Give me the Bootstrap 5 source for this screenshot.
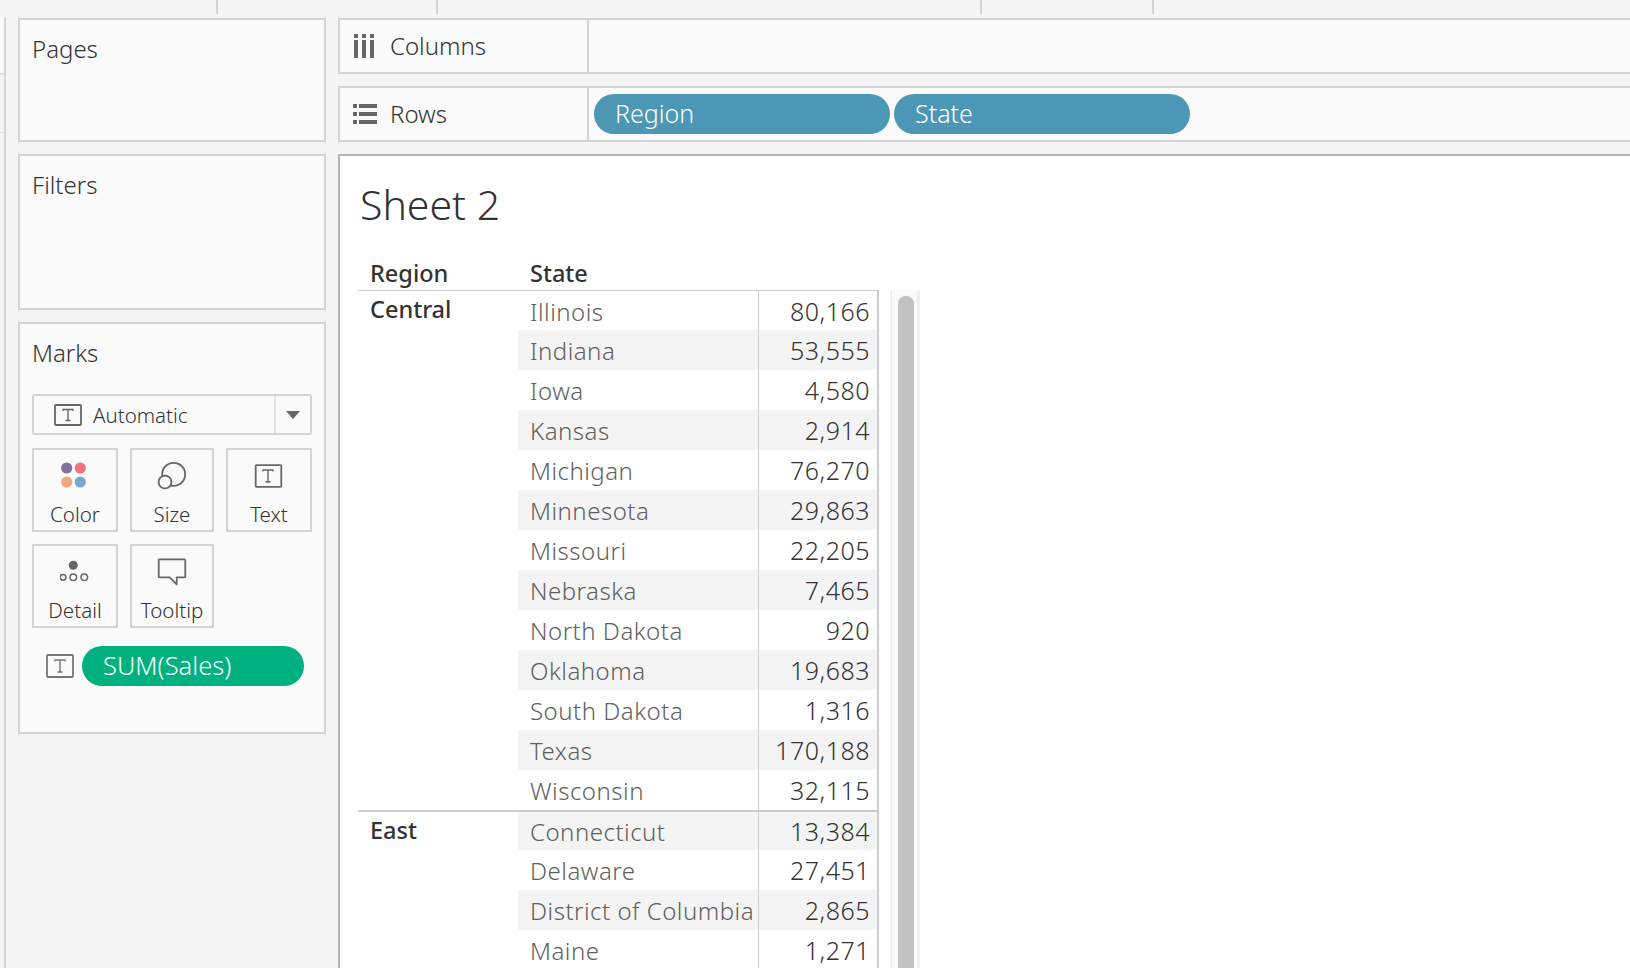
<!DOCTYPE html>
<html lang="en">
<head>
  <meta charset="UTF-8" />
  <title>Sheet 2</title>
  <link href="https://cdn.jsdelivr.net/npm/bootstrap@5.3.3/dist/css/bootstrap.min.css" rel="stylesheet">
  <style>
    body {
      height: 968px;
      overflow: hidden;
      background-color: #f5f5f5;
      font-family: "Noto Sans", "Lato", sans-serif;
      color: #333;
    }

    /* strip of tab ticks along the top */
    .top-ticks { height: 14px; }
    .top-ticks div { border-right: 2px solid #d4d4d4; height: 14px; }
    .tick-a { width: 218px; }
    .tick-b { width: 220px; }
    .tick-c { width: 544px; }
    .tick-d { width: 172px; }

    .app-body { margin-top: 4px; height: 950px; }

    .edge-strip { width: 6px; margin-right: 12px; border-right: 2px solid #d4d4d4; flex: none; }
    .edge-cell { height: 57px; border-bottom: 2px solid #ddd; background-color: #fafafa; }
    .edge-cell + .edge-cell { height: 58px; border-bottom: 1px solid #e4e4e4; background-color: transparent; }

    .side-col { width: 308px; flex: none; margin-right: 12px; gap: 12px; }
    .side-box {
      flex: none;
      background-color: #fafafa;
      border: 2px solid #d4d4d4;
      padding: 14px 12px;
      font-size: 24px;
      font-weight: 300;
      line-height: 30px;
    }
    .box-pages { height: 124px; }
    .box-filters { height: 156px; }
    .box-marks { height: 412px; }

    .mark-select {
      height: 41px;
      margin-top: 26px;
      border: 2px solid #d4d4d4;
      border-radius: 3px;
      font-size: 20.5px;
    }
    .mark-select .sel-label { padding-left: 20px; gap: 11px; }
    .sel-arrow { width: 36px; height: 100%; border-left: 2px solid #e2e2e2; }

    .mark-grid { margin-top: 13px; display: grid; grid-template-columns: 86px 84px 86px; gap: 12px; }
    .mark-btn {
      height: 84px;
      border: 2px solid #d4d4d4;
      font-size: 20.5px;
      line-height: 24px;
      padding-top: 10px;
      text-align: center;
      color: #333;
    }
    .mark-btn svg { display: block; margin: 0 auto 12px; }

    .pill-row { margin-top: 18px; padding-left: 14px; gap: 8px; }
    .field-pill { height: 40px; color: #fff; font-size: 25px; font-weight: 300; line-height: 38px; padding-left: 21px; }
    .pill-sales { width: 222px; background-color: #00b180; font-size: 25.5px; }
    .pill-dim { width: 296px; background-color: #4b97b5; }

    .main-col { width: 1300px; flex: none; gap: 12px; }
    .shelf {
      flex: none;
      height: 56px;
      background-color: #fafafa;
      border: 2px solid #d4d4d4;
      font-size: 24px;
      font-weight: 300;
    }
    .shelf-label { width: 249px; height: 100%; border-right: 2px solid #d4d4d4; flex: none; }
    .shelf-icon { width: 50px; flex: none; padding-right: 1px; }
    .shelf-pills { padding-left: 5px; gap: 4px; }

    .view-pane {
      flex: none;
      height: 900px;
      background-color: #fff;
      border: 2px solid #b5b5b5;
      padding-left: 18px;
    }
    .sheet-title {
      font-size: 41px;
      font-weight: 300;
      line-height: 48px;
      margin: 0;
      padding: 24px 0 0 2px;
      color: #333;
      height: 100px;
    }

    .data-wrap { gap: 11px; }
    .data-table { table-layout: fixed; width: 521px; border-collapse: separate; border-spacing: 0; }
    .data-table th {
      height: 35px;
      padding: 0 0 0 12px;
      font-size: 23.5px;
      font-weight: 500;
      line-height: 30px;
      border-bottom: 1px solid #ccc;
      color: #333;
    }
    .data-table td {
      height: 40px;
      padding: 0 12px;
      font-size: 24px;
      font-weight: 300;
      line-height: 30px;
      white-space: nowrap;
      vertical-align: middle;
    }
    .data-table tbody tr:first-child td { height: 39px; }
    .data-table td.st-cell { color: #5f5f5f; letter-spacing: .5px; overflow: hidden; padding: 2px 0 0 12px; }
    .data-table td.val-cell {
      font-size: 25px;
      letter-spacing: .5px;
      text-align: right;
      border-left: 1px solid #ccc;
      border-right: 2px solid #ccc;
      padding: 0 7px 0 0;
      color: #333;
    }
    .data-table td.reg-cell { font-size: 23.5px; font-weight: 500; vertical-align: top; padding: 3px 0 0 12px; }
    .data-table tr.band td.st-cell, .data-table tr.band td.val-cell { background-color: #f4f4f4; }
    .data-table tr.sect td { border-top: 2px solid #ccc; }

    .scroll-track {
      width: 30px;
      height: 800px;
      margin-top: 34px;
      padding: 6px 0 0 6px;
      background-color: #fafafa;
      border-left: 2px solid #f0f0f0;
      border-right: 3px solid #f0f0f0;
    }
    .scroll-thumb { width: 16px; height: 800px; background-color: #c1c1c1; border-radius: 8px 8px 0 0; }
  </style>
</head>
<body>

<div class="top-ticks d-flex">
  <div class="tick-a"></div>
  <div class="tick-b"></div>
  <div class="tick-c"></div>
  <div class="tick-d"></div>
</div>

<div class="app-body d-flex">
  <div class="edge-strip">
    <div class="edge-cell"></div>
    <div class="edge-cell"></div>
  </div>

  <!-- Cards -->
  <div class="side-col d-flex flex-column">
    <div class="side-box box-pages">Pages</div>
    <div class="side-box box-filters">Filters</div>
    <div class="side-box box-marks">
      <div>Marks</div>
      <div class="mark-select d-flex align-items-center justify-content-between">
        <div class="sel-label d-flex align-items-center">
          <svg width="28" height="22" viewBox="0 0 28 22"><rect x="1" y="1" width="26" height="20" rx="1" fill="none" stroke="#666" stroke-width="1.8"/><path d="M9 7V5.5h10V7M14 5.5v11M11.5 16.5h5" fill="none" stroke="#666" stroke-width="1.4"/></svg>
          <span>Automatic</span>
        </div>
        <div class="sel-arrow d-flex align-items-center justify-content-center">
          <svg width="14" height="8" viewBox="0 0 14 8"><path d="M0 0h14L7 8z" fill="#666"/></svg>
        </div>
      </div>
      <div class="mark-grid">
        <div class="mark-btn">
          <svg width="30" height="30" viewBox="0 0 30 30"><circle cx="6.7" cy="8" r="5.6" fill="#86709a"/><circle cx="20.3" cy="8" r="5.6" fill="#f7707f"/><circle cx="6.7" cy="22" r="5.6" fill="#f2a67c"/><circle cx="20.3" cy="22" r="5.6" fill="#7ba6cf"/></svg>
          Color
        </div>
        <div class="mark-btn">
          <svg width="30" height="30" viewBox="0 0 30 30"><circle cx="8" cy="22" r="6.4" fill="none" stroke="#666" stroke-width="1.8"/><path d="M5.34 16.17A11.5 11.5 0 1 1 13.46 25.35" fill="none" stroke="#666" stroke-width="1.8"/></svg>
          Size
        </div>
        <div class="mark-btn">
          <svg width="30" height="30" viewBox="0 0 30 30"><rect x="1.7" y="5.2" width="25.6" height="21.6" rx="1" fill="none" stroke="#666" stroke-width="1.8"/><path d="M9 11.5V10h10v1.5M14 10v12M11.5 22h5" fill="none" stroke="#666" stroke-width="1.4"/></svg>
          Text
        </div>
        <div class="mark-btn">
          <svg width="30" height="30" viewBox="0 0 30 30"><circle cx="13.3" cy="9.3" r="4.5" fill="#666"/><circle cx="3" cy="21.3" r="2.9" fill="none" stroke="#666" stroke-width="1.5"/><circle cx="13.3" cy="21.3" r="3.3" fill="none" stroke="#666" stroke-width="1.5"/><circle cx="24.3" cy="21.3" r="3.3" fill="none" stroke="#666" stroke-width="1.5"/></svg>
          Detail
        </div>
        <div class="mark-btn">
          <svg width="30" height="30" viewBox="0 0 30 30"><path d="M2.7 3.3h24.6a1 1 0 0 1 1 1v16a1 1 0 0 1-1 1h-7.6v7l-7-7H2.7a1 1 0 0 1-1-1v-16a1 1 0 0 1 1-1z" fill="none" stroke="#666" stroke-width="1.8" stroke-linejoin="round"/></svg>
          Tooltip
        </div>
      </div>
      <div class="pill-row d-flex align-items-center">
        <svg width="28" height="24" viewBox="0 0 28 24"><rect x="1" y="1" width="26" height="22" rx="1" fill="none" stroke="#777" stroke-width="1.8"/><path d="M9 7.5V6h10v1.5M14 6v12M11.5 18h5" fill="none" stroke="#777" stroke-width="1.4"/></svg>
        <div class="field-pill pill-sales rounded-pill">SUM(Sales)</div>
      </div>
    </div>
  </div>

  <div class="main-col d-flex flex-column">
    <div class="shelf d-flex align-items-center">
      <div class="shelf-label d-flex align-items-center">
        <div class="shelf-icon d-flex justify-content-center">
          <svg width="22" height="26" viewBox="0 0 22 26"><path d="M0 1h4v4H0zM8 1h4v4H8zM16 1h4v4h-4zM0 7h4v18H0zM8 7h4v18H8zM16 7h4v18h-4z" fill="#666"/></svg>
        </div>
        <span>Columns</span>
      </div>
    </div>
    <div class="shelf d-flex align-items-center">
      <div class="shelf-label d-flex align-items-center">
        <div class="shelf-icon d-flex justify-content-center">
          <svg width="24" height="20" viewBox="0 0 24 20"><path d="M0 0h4v4H0zM6 0h18v4H6zM0 8h4v4H0zM6 8h18v4H6zM0 16h4v4H0zM6 16h18v4H6z" fill="#666"/></svg>
        </div>
        <span>Rows</span>
      </div>
      <div class="shelf-pills d-flex align-items-center">
        <div class="field-pill pill-dim rounded-pill">Region</div>
        <div class="field-pill pill-dim rounded-pill">State</div>
      </div>
    </div>

    <div class="view-pane">
      <h1 class="sheet-title">Sheet 2</h1>
      <div class="data-wrap d-flex align-items-start">
        <table class="data-table">
          <colgroup><col style="width:160px"><col style="width:240px"><col style="width:121px"></colgroup>
          <thead>
            <tr><th>Region</th><th>State</th><th></th></tr>
          </thead>
          <tbody>
            <tr><td class="reg-cell" rowspan="13">Central</td><td class="st-cell">Illinois</td><td class="val-cell">80,166</td></tr>
            <tr class="band"><td class="st-cell">Indiana</td><td class="val-cell">53,555</td></tr>
            <tr><td class="st-cell">Iowa</td><td class="val-cell">4,580</td></tr>
            <tr class="band"><td class="st-cell">Kansas</td><td class="val-cell">2,914</td></tr>
            <tr><td class="st-cell">Michigan</td><td class="val-cell">76,270</td></tr>
            <tr class="band"><td class="st-cell">Minnesota</td><td class="val-cell">29,863</td></tr>
            <tr><td class="st-cell">Missouri</td><td class="val-cell">22,205</td></tr>
            <tr class="band"><td class="st-cell">Nebraska</td><td class="val-cell">7,465</td></tr>
            <tr><td class="st-cell">North Dakota</td><td class="val-cell">920</td></tr>
            <tr class="band"><td class="st-cell">Oklahoma</td><td class="val-cell">19,683</td></tr>
            <tr><td class="st-cell">South Dakota</td><td class="val-cell">1,316</td></tr>
            <tr class="band"><td class="st-cell">Texas</td><td class="val-cell">170,188</td></tr>
            <tr><td class="st-cell">Wisconsin</td><td class="val-cell">32,115</td></tr>
            <tr class="band sect"><td class="reg-cell" rowspan="4">East</td><td class="st-cell">Connecticut</td><td class="val-cell">13,384</td></tr>
            <tr><td class="st-cell">Delaware</td><td class="val-cell">27,451</td></tr>
            <tr class="band"><td class="st-cell">District of Columbia</td><td class="val-cell">2,865</td></tr>
            <tr><td class="st-cell">Maine</td><td class="val-cell">1,271</td></tr>
          </tbody>
        </table>
        <div class="scroll-track"><div class="scroll-thumb"></div></div>
      </div>
    </div>
  </div>
</div>

<script src="https://cdn.jsdelivr.net/npm/bootstrap@5.3.3/dist/js/bootstrap.bundle.min.js"></script>
</body>
</html>
